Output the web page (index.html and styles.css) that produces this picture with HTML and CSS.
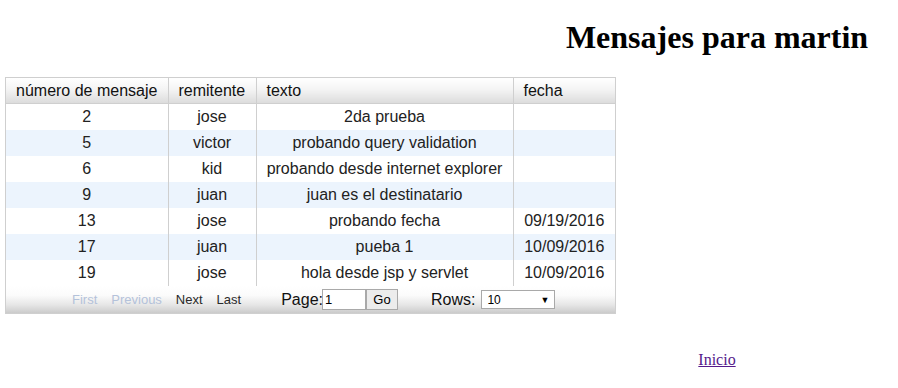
FILE: index.html
```html
<!DOCTYPE html>
<html lang="es">
<head>
<meta charset="utf-8">
<title>Mensajes para martin</title>
<link rel="stylesheet" href="styles.css">
</head>
<body>
<div class="page">
  <div class="title-area">
    <h1 class="title">Mensajes para martin</h1>
  </div>
  <div class="grid">
    <table class="grid-table">
      <colgroup>
        <col class="c1"><col class="c2"><col class="c3"><col class="c4">
      </colgroup>
      <thead>
        <tr>
          <th>número de mensaje</th>
          <th>remitente</th>
          <th>texto</th>
          <th>fecha</th>
        </tr>
      </thead>
      <tbody>
        <tr><td>2</td><td>jose</td><td>2da prueba</td><td></td></tr>
        <tr class="alt"><td>5</td><td>victor</td><td>probando query validation</td><td></td></tr>
        <tr><td>6</td><td>kid</td><td>probando desde internet explorer</td><td></td></tr>
        <tr class="alt"><td>9</td><td>juan</td><td>juan es el destinatario</td><td></td></tr>
        <tr><td>13</td><td>jose</td><td>probando fecha</td><td>09/19/2016</td></tr>
        <tr class="alt"><td>17</td><td>juan</td><td>pueba 1</td><td>10/09/2016</td></tr>
        <tr><td>19</td><td>jose</td><td>hola desde jsp y servlet</td><td>10/09/2016</td></tr>
      </tbody>
    </table>
    <div class="pager">
      <div class="nav">
        <span class="nav-item disabled">First</span>
        <span class="nav-item disabled">Previous</span>
        <span class="nav-item">Next</span>
        <span class="nav-item">Last</span>
      </div>
      <div class="page-input">
        <span class="label">Page:</span><input class="page-box" type="text" value="1"><button class="go" type="button">Go</button>
      </div>
      <div class="rows">
        <span class="label">Rows:</span>
        <div class="select"><span>10</span><span class="arrow">▼</span></div>
      </div>
    </div>
  </div>
  <div class="footer-area">
    <a class="home" href="#">Inicio</a>
  </div>
</div>
</body>
</html>
```
FILE: styles.css
```css
html, body {
  margin: 0;
  padding: 0;
  background: #fff;
}

.page {
  padding: 19px 0 0 5px;
  font-family: "Liberation Serif", "Times New Roman", serif;
  color: #000;
}

.title-area {
  width: 362px;
  margin-left: auto;
  text-align: center;
}

.title {
  margin: 0;
  font-size: 32px;
  line-height: 37px;
  font-weight: bold;
}

.grid {
  margin-top: 21px;
  width: 609px;
  border: 1px solid #cfcfcf;
  font-family: "Liberation Sans", Arial, sans-serif;
  font-size: 16px;
  color: #222;
}

.grid-table {
  width: 609px;
  table-layout: fixed;
  border-collapse: collapse;
}

.c1 { width: 162px; }
.c2 { width: 88px; }
.c3 { width: 257px; }
.c4 { width: 102px; }

.grid-table th {
  height: 25px;
  padding: 0 0 0 10px;
  text-align: left;
  font-weight: normal;
  color: #111;
  background: linear-gradient(#ffffff 0%, #f4f4f4 45%, #dcdcdc 100%);
  border-bottom: 1px solid #cfcfcf;
  border-left: 1px solid #cfcfcf;
  white-space: nowrap;
}

.grid-table th:first-child { border-left: none; }

.grid-table td {
  height: 26px;
  padding: 0;
  text-align: center;
  white-space: nowrap;
  border-left: 1px solid #cfcfcf;
}

.grid-table td:first-child { border-left: none; }

.grid-table tr.alt td {
  background: #ecf4fd;
}

.pager {
  height: 27px;
  display: flex;
  align-items: center;
  background: linear-gradient(#ffffff 0%, #fbfbfb 35%, #e6e6e6 70%, #cbcbcb 100%);
}

.nav {
  display: flex;
  margin-left: 59px;
  font-size: 13px;
}

.nav-item {
  padding: 0 7px;
  color: #2a2a2a;
}

.nav-item.disabled {
  color: #b4c2da;
}

.page-input {
  display: flex;
  align-items: center;
  margin-left: 33px;
}

.label {
  font-size: 16px;
  color: #111;
}

.page-box {
  box-sizing: border-box;
  width: 44px;
  height: 21px;
  margin: 0 0 0 -1px;
  padding: 0 2px;
  border: 1px solid #a9a9a9;
  font-family: "Liberation Sans", Arial, sans-serif;
  font-size: 13px;
  color: #000;
  background: #fff;
}

.go {
  box-sizing: border-box;
  width: 32px;
  height: 21px;
  margin: 0;
  padding: 0;
  border: 1px solid #a9a9a9;
  background: #ececec;
  font-family: "Liberation Sans", Arial, sans-serif;
  font-size: 13px;
  color: #000;
}

.rows {
  display: flex;
  align-items: center;
  margin-left: 33px;
}

.select {
  box-sizing: border-box;
  width: 74px;
  height: 19px;
  margin-left: 6px;
  padding: 0 5px 0 5px;
  border: 1px solid #a9a9a9;
  background: #fff;
  display: flex;
  align-items: center;
  justify-content: space-between;
  font-size: 12px;
  color: #000;
}

.arrow {
  font-size: 9px;
}

.footer-area {
  width: 362px;
  margin: 37px 0 0 auto;
  text-align: center;
  font-size: 16px;
  line-height: 18px;
}

.home {
  color: #551a8b;
  text-decoration: underline;
}
```
